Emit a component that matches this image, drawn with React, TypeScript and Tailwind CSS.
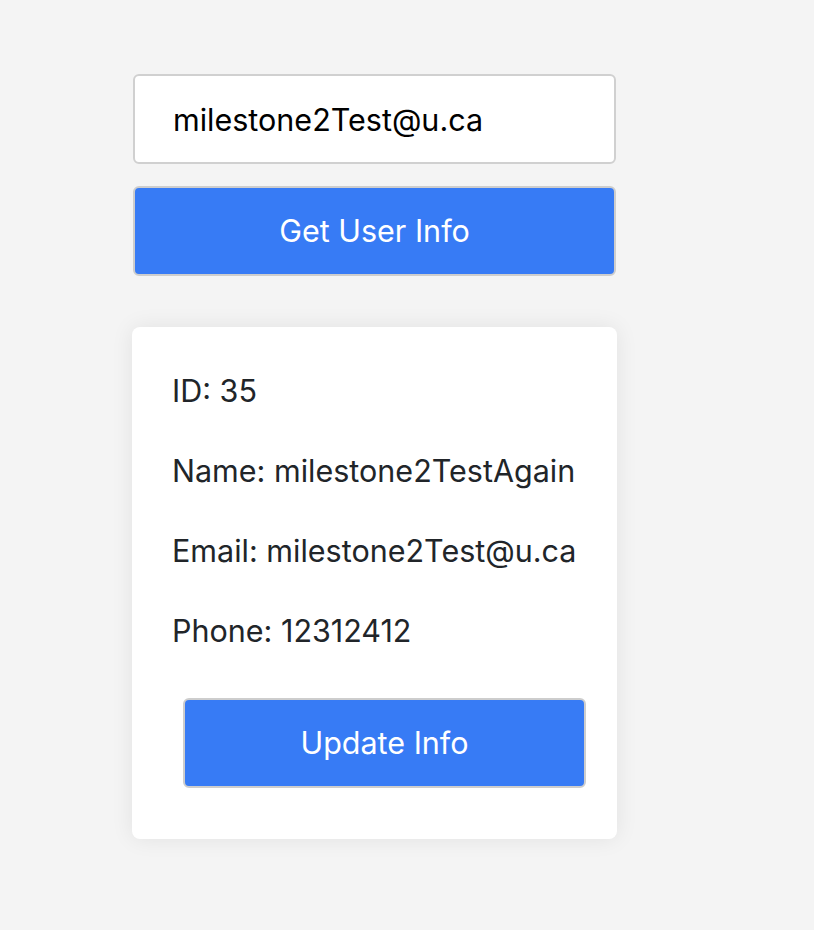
import { useState } from 'react';

interface User {
    id: number;
    name: string;
    email: string;
    phone: string;
}

const user: User = {
    id: 35,
    name: 'milestone2TestAgain',
    email: 'milestone2Test@u.ca',
    phone: '12312412',
};

export default function App() {
    const [email, setEmail] = useState('milestone2Test@u.ca');

    return (
        <div className="min-h-screen bg-[#f4f4f4] pt-[74px] pl-[133px] font-['Inter','Noto_Sans',sans-serif]">
            <div className="w-[483px] flex flex-col">
                <input
                    value={email}
                    onChange={(e) => setEmail(e.target.value)}
                    className="h-[90px] w-full rounded-[6px] border-2 border-[#d0d0d0] bg-white pl-[38px] text-[30.5px] text-black outline-none"
                />
                <button className="mt-[22px] h-[90px] w-full rounded-[6px] border-2 border-[#cdcdcd] bg-[#377bf5] text-[30.5px] text-white">
                    Get User Info
                </button>

                <div className="mt-[51px] -ml-px w-[485px] rounded-[8px] bg-white pt-[40px] pb-[51px] shadow-[0_0_22px_rgba(0,0,0,0.08)]">
                    <div className="flex flex-col gap-[32px] pl-[40px] text-[30.5px] leading-[48px] text-[#212529]">
                        <p>ID: {user.id}</p>
                        <p>Name: {user.name}</p>
                        <p>Email: {user.email}</p>
                        <p>Phone: {user.phone}</p>
                    </div>
                    <button className="mt-[43px] ml-[51px] h-[90px] w-[403px] rounded-[6px] border-2 border-[#cdcdcd] bg-[#377bf5] text-[30.5px] text-white">
                        Update Info
                    </button>
                </div>
            </div>
        </div>
    );
}
